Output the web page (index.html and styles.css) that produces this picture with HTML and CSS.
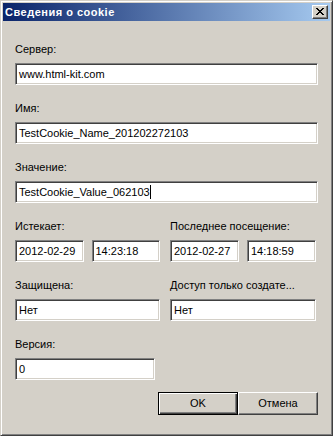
FILE: index.html
```html
<!DOCTYPE html>
<html lang="ru">
<head>
    <meta charset="UTF-8">
    <meta name="viewport" content="width=device-width, initial-scale=1.0">
    <title>Сведения о cookie</title>
    <link rel="stylesheet" href="styles.css">
</head>
<body>
    <div class="window">
        <div class="titlebar">
            <span class="title">Сведения о cookie</span>
            <div class="close-btn">
                <svg width="8" height="7" viewBox="0 0 8 7" shape-rendering="crispEdges">
                    <path d="M0 0h2v1H0zM6 0h2v1H6zM1 1h2v1H1zM5 1h2v1H5zM2 2h4v1H2zM3 3h2v1H3zM2 4h4v1H2zM1 5h2v1H1zM5 5h2v1H5zM0 6h2v1H0zM6 6h2v1H6z" fill="#000"/>
                </svg>
            </div>
        </div>

        <div class="client">
            <div class="field">
                <div class="label">Сервер:</div>
                <div class="edit">www.html-kit.com</div>
            </div>

            <div class="field">
                <div class="label">Имя:</div>
                <div class="edit">TestCookie_Name_201202272103</div>
            </div>

            <div class="field">
                <div class="label">Значение:</div>
                <div class="edit">TestCookie_Value_062103<span class="caret"></span></div>
            </div>

            <div class="field two-col">
                <div class="col">
                    <div class="label">Истекает:</div>
                    <div class="pair">
                        <div class="edit">2012-02-29</div>
                        <div class="edit">14:23:18</div>
                    </div>
                </div>
                <div class="col">
                    <div class="label">Последнее посещение:</div>
                    <div class="pair">
                        <div class="edit">2012-02-27</div>
                        <div class="edit">14:18:59</div>
                    </div>
                </div>
            </div>

            <div class="field two-col">
                <div class="col">
                    <div class="label">Защищена:</div>
                    <div class="edit">Нет</div>
                </div>
                <div class="col">
                    <div class="label">Доступ только создате...</div>
                    <div class="edit">Нет</div>
                </div>
            </div>

            <div class="field">
                <div class="label">Версия:</div>
                <div class="edit edit-short">0</div>
            </div>

            <div class="buttons">
                <div class="btn btn-default">OK</div>
                <div class="btn">Отмена</div>
            </div>
        </div>
    </div>
</body>
</html>
```

FILE: styles.css
```css
body {
    margin: 0;
    padding: 0;
    background: #d4d0c8;
    font-family: 'Liberation Sans', Arial, sans-serif;
    font-size: 11px;
    color: #000;
}
.window {
    width: 333px;
    height: 436px;
    box-sizing: border-box;
    background: #d4d0c8;
    border: 1px solid;
    border-color: #d4d0c8 #404040 #404040 #d4d0c8;
    box-shadow: inset 1px 1px #fff, inset -1px -1px #808080;
    padding: 2px;
}
.titlebar {
    height: 18px;
    background: linear-gradient(to right, #0a246a, #a6caf0);
    display: flex;
    align-items: center;
    justify-content: space-between;
    padding: 0 2px 0 2px;
}
.title {
    color: #fff;
    font-weight: bold;
    font-size: 11px;
    letter-spacing: 0.5px;
}
.close-btn {
    width: 16px;
    height: 14px;
    box-sizing: border-box;
    background: #d4d0c8;
    border: 1px solid;
    border-color: #fff #404040 #404040 #fff;
    box-shadow: inset -1px -1px #808080;
    display: flex;
    align-items: center;
    justify-content: center;
    padding: 0 1px 1px 0;
}
.client {
    padding: 22px 12px 0 12px;
}
.field {
    margin-bottom: 17px;
}
.label {
    height: 13px;
    line-height: 13px;
    margin-bottom: 7px;
    white-space: nowrap;
}
.edit {
    height: 22px;
    box-sizing: border-box;
    background: #fff;
    border: 1px solid;
    border-color: #808080 #fff #fff #808080;
    box-shadow: inset 1px 1px #404040, inset -1px -1px #d4d0c8;
    padding: 0 3px;
    line-height: 20px;
    white-space: nowrap;
    overflow: hidden;
}
.caret {
    display: inline-block;
    width: 1px;
    height: 14px;
    background: #000;
    vertical-align: -3px;
}
.two-col {
    display: grid;
    grid-template-columns: 145px 146px;
    column-gap: 10px;
}
.pair {
    display: grid;
    grid-template-columns: 1fr 1fr;
    column-gap: 8px;
}
.edit-short {
    width: 140px;
}
.buttons {
    display: flex;
    justify-content: flex-end;
    margin-top: -5px;
}
.btn {
    width: 80px;
    height: 23px;
    box-sizing: border-box;
    border: 1px solid;
    border-color: #fff #404040 #404040 #fff;
    box-shadow: inset -1px -1px #808080;
    text-align: center;
    line-height: 21px;
}
.btn-default {
    border: 1px solid #000;
    box-shadow: inset 1px 1px #fff, inset -1px -1px #404040, inset -2px -2px #808080;
}
```
